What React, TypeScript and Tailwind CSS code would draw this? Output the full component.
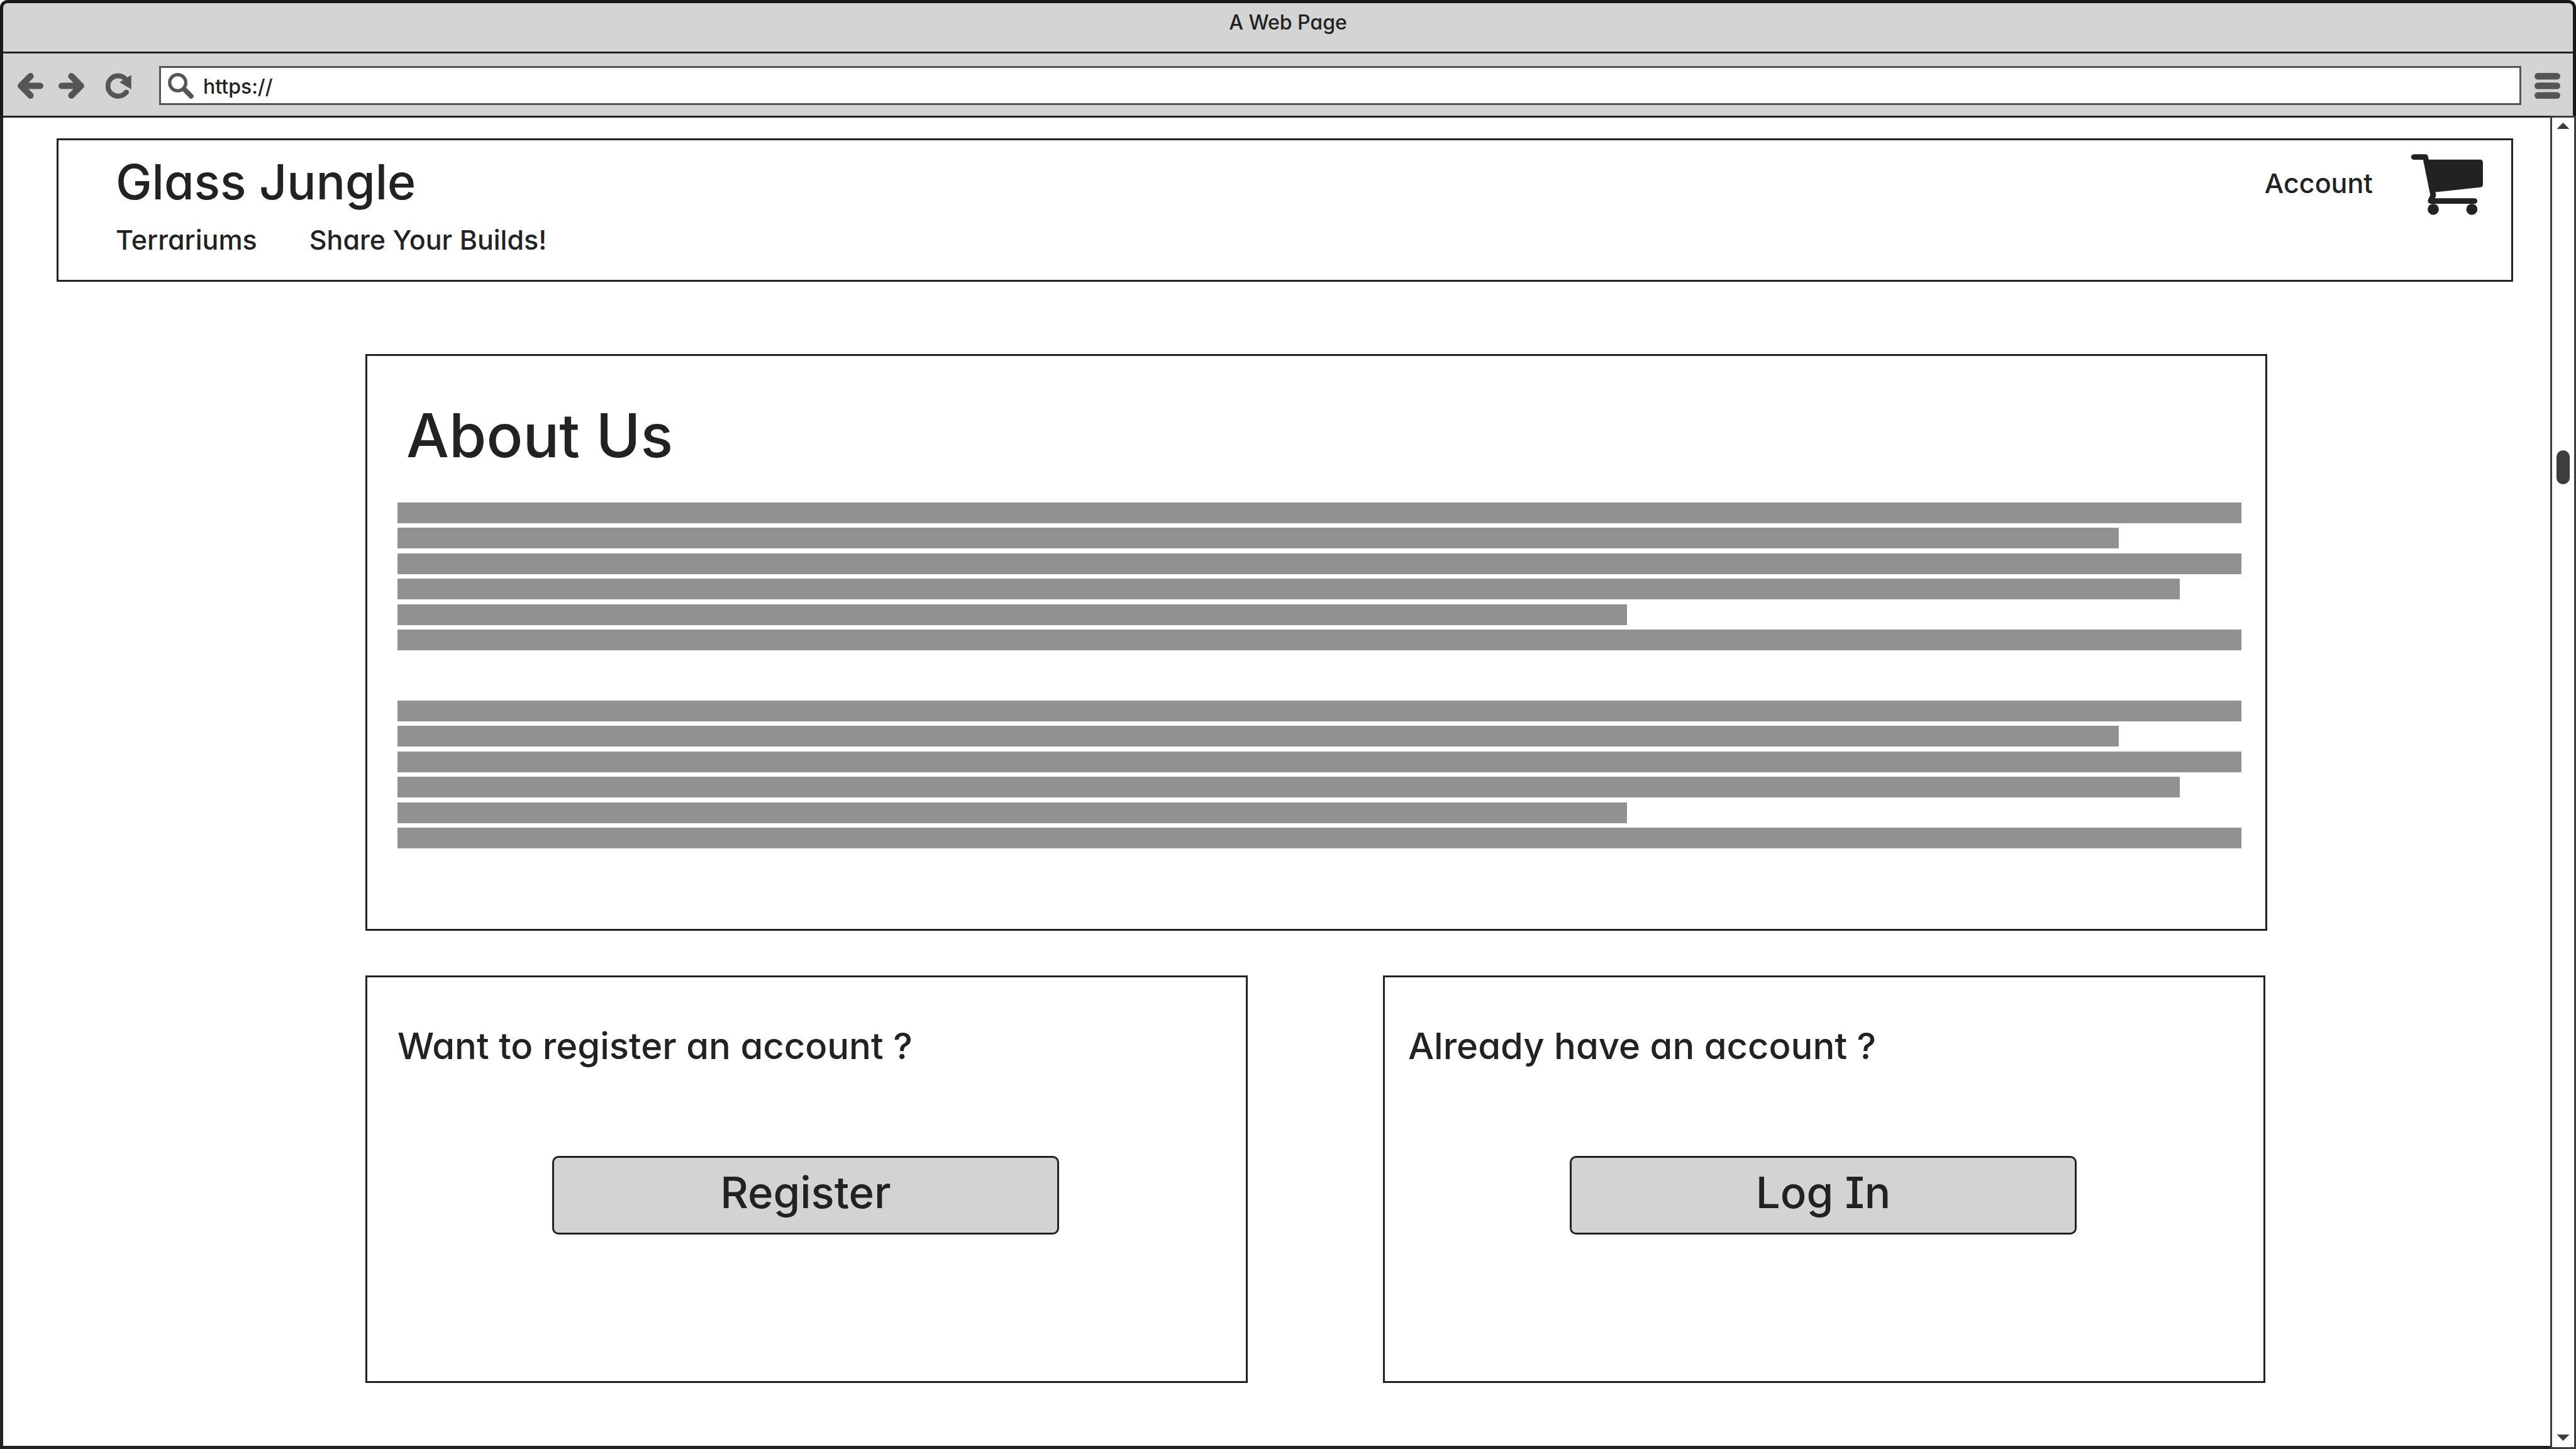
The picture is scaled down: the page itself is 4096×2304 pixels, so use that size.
import React from 'react';

const LINE_WIDTHS = ['w-full', 'w-14/15', 'w-full', 'w-29/30', 'w-2/3', 'w-full'];

function ArrowIcon({ flipped = false }: { flipped?: boolean }) {
  return (
    <svg viewBox="0 0 67 67" className="size-[41px]" fill="none" stroke="currentColor" strokeWidth="16.7" strokeLinecap="round" strokeLinejoin="round" aria-hidden="true">
      {flipped ? <path d="M33.5 8.4 58.5 33.5 33.5 58.6M8.4 33.5H54" /> : <path d="M33.5 8.4 8.5 33.5 33.5 58.6M58.6 33.5H13" />}
    </svg>
  );
}

function ReloadIcon() {
  return (
    <svg viewBox="0 0 67 67" className="size-[41px]" aria-hidden="true">
      <path d="M52 16A26.5 26.5 0 1 0 54.5 48.5" fill="none" stroke="currentColor" strokeWidth="12.8" />
      <circle cx="54" cy="50" r="6.4" fill="currentColor" />
      <path d="M66.6 5.5V42.5L36 24Z" fill="currentColor" />
    </svg>
  );
}

function SearchIcon() {
  return (
    <svg viewBox="0 0 67 67" className="size-[41px] shrink-0" fill="none" stroke="currentColor" aria-hidden="true">
      <circle cx="25.5" cy="25.3" r="21" strokeWidth="8.6" />
      <path d="M43 43 60.3 60.5" strokeWidth="12.8" strokeLinecap="round" />
    </svg>
  );
}

function MenuIcon() {
  return (
    <svg viewBox="0 0 67 67" className="size-[41px]" fill="currentColor" aria-hidden="true">
      <rect width="67" height="17" rx="8.5" />
      <rect y="25" width="67" height="17" rx="8.5" />
      <rect y="50" width="67" height="17" rx="8.5" />
    </svg>
  );
}

function CartIcon() {
  return (
    <svg viewBox="180 120 558 473" className="h-[97px] w-[114px]" fill="currentColor" aria-hidden="true">
      <path d="M201 141.500H290L351 440 331 484H673" fill="none" stroke="currentColor" strokeWidth="43" strokeLinecap="round" strokeLinejoin="round" />
      <path d="M300 162H717A21 21 0 0 1 738 183V356A21 21 0 0 1 719 377L350 418Z" />
      <circle cx="351.500" cy="549" r="43.500" />
      <circle cx="652" cy="549" r="43.500" />
    </svg>
  );
}

function TextLines() {
  return (
    <div className="flex h-[235px] flex-col justify-between">
      {LINE_WIDTHS.map((width, i) => (
        <div key={i} className={`h-[33px] bg-[#919191] ${width}`} />
      ))}
    </div>
  );
}

function ActionCard({ question, action, inset }: { question: string; action: string; inset: string }) {
  return (
    <section className="border-[3px] border-[#222] pt-[73px] pr-[3px] pb-[233px]">
      <h2 className={`text-[58px] leading-[72px] ${inset}`}>{question}</h2>
      <button type="button" className="mx-auto mt-[139px] block h-[125px] w-[806px] max-w-full rounded-[10px] border-[3px] border-[#222] bg-[#d3d3d3] pb-[10px] text-[69px] leading-[84px]">
        {action}
      </button>
    </section>
  );
}

export default function App() {
  return (
    <div className="flex min-h-screen flex-col bg-white font-['Inter',sans-serif] font-medium text-[#222] [font-feature-settings:'cv11','cv08']">
      <header className="rounded-t-[12px] border-x-[5px] border-t-[5px] border-[#181818] bg-[#d4d4d4]">
        <div className="border-b-[3px] border-[#222] pt-[7px] pb-[22px] text-center text-[32px] leading-[48px]">A Web Page</div>
        <div className="flex items-center pt-[20px] pr-[20px] pb-[17px] pl-[23px] text-[#555]">
          <div className="flex gap-[24px]">
            <button type="button" aria-label="Back"><ArrowIcon /></button>
            <button type="button" aria-label="Forward"><ArrowIcon flipped /></button>
            <button type="button" aria-label="Reload" className="ml-[10px]"><ReloadIcon /></button>
          </div>
          <label className="ml-[44px] flex h-[62px] flex-1 items-center gap-[15px] border-[3px] border-[#555] bg-white px-[11px]">
            <SearchIcon />
            <input type="text" aria-label="Address" defaultValue="https://" className="min-w-0 flex-1 pt-[4px] text-[32px] leading-[48px] text-[#222] outline-none" />
          </label>
          <button type="button" aria-label="Menu" className="ml-[21px]"><MenuIcon /></button>
        </div>
      </header>

      <div className="flex flex-1">
        <main className="flex-1 border-t-[3px] border-b-[5px] border-l-[5px] border-[#222] pt-[33px]">
          <header className="mr-[59px] ml-[85px] flex items-start justify-between border-[3px] border-[#222] pr-[45px] pb-[36px] pl-[91px]">
            <div className="pt-[18px]">
              <h1 className="text-[77px] leading-[96px]">Glass Jungle</h1>
              <nav className="mt-[16px] flex gap-[83px] text-[43px] leading-[56px]">
                <a href="#terrariums">Terrariums</a>
                <a href="#builds">Share Your Builds!</a>
              </nav>
            </div>
            <div className="flex items-center gap-[61px] pt-[22px]">
              <a href="#account" className="pb-[6px] text-[43px] leading-[56px]">Account</a>
              <a href="#cart" aria-label="Cart"><CartIcon /></a>
            </div>
          </header>

          <div className="mt-[115px] pr-[450px] pl-[576px]">
            <section className="border-[3px] border-[#222] pt-[66px] pr-[38px] pb-[128px] pl-[48px]">
              <h2 className="pl-[14px] text-[96px] leading-[120px]">About Us</h2>
              <div className="mt-[47px] flex flex-col gap-[80px]">
                <TextLines />
                <TextLines />
              </div>
            </section>
            <div className="mt-[71px] mr-[3px] grid grid-cols-2 gap-[215px]">
              <ActionCard question="Want to register an account ?" action="Register" inset="pl-[48px]" />
              <ActionCard question="Already have an account ?" action="Log In" inset="pl-[37px]" />
            </div>
          </div>
        </main>

        <aside aria-label="Scrollbar" className="flex w-[41px] flex-col items-center border-[3px] border-[#3d3d3d] pt-[8px] pb-[10px]">
          <svg viewBox="0 0 20 10" className="h-[10px] w-[21px]" fill="#3d3d3d" aria-hidden="true"><path d="M10 0 20 10H0Z" /></svg>
          <div className="mt-[511px] h-[54px] w-[21px] rounded-full bg-[#3d3d3d]" />
          <svg viewBox="0 0 20 10" className="mt-auto h-[10px] w-[21px]" fill="#3d3d3d" aria-hidden="true"><path d="M0 0H20L10 10Z" /></svg>
        </aside>
      </div>
    </div>
  );
}
